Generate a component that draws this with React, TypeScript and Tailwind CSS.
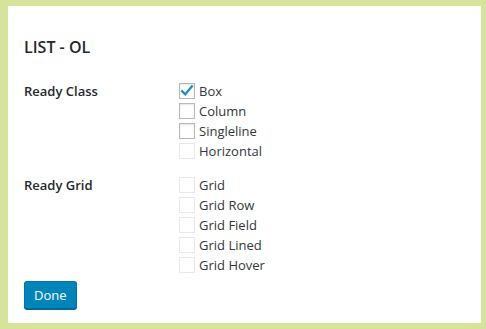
const classOptions = [
  { label: "Box", checked: true, enabled: true },
  { label: "Column", checked: false, enabled: true },
  { label: "Singleline", checked: false, enabled: true },
  { label: "Horizontal", checked: false, enabled: false },
];

const gridOptions = [
  { label: "Grid", checked: false, enabled: false },
  { label: "Grid Row", checked: false, enabled: false },
  { label: "Grid Field", checked: false, enabled: false },
  { label: "Grid Lined", checked: false, enabled: false },
  { label: "Grid Hover", checked: false, enabled: false },
];

type Option = { label: string; checked: boolean; enabled: boolean };

function CheckRow({ option }: { option: Option }) {
  return (
    <label className="flex h-[16px] items-center gap-[4px]">
      <span
        className={
          option.enabled
            ? "flex h-[16px] w-[16px] items-center justify-center border border-[#b4b9be] bg-white shadow-[inset_0_1px_2px_rgba(0,0,0,0.1)]"
            : "flex h-[16px] w-[16px] items-center justify-center border border-[#e8e8e8] bg-white"
        }
      >
        {option.checked && (
          <svg width="16" height="16" viewBox="0 0 16 16">
            <path
              d="M2.5 8.2 L6 11.8 L13.6 2.8"
              fill="none"
              stroke="#1e8cbe"
              strokeWidth="2.6"
              strokeLinecap="square"
            />
          </svg>
        )}
      </span>
      <span className="text-[13px] leading-none text-[#32373c]">{option.label}</span>
    </label>
  );
}

function Group({ title, options }: { title: string; options: Option[] }) {
  return (
    <div className="flex">
      <div className="w-[155px] text-[13px] font-semibold leading-[16px] text-[#23282d]">
        {title}
      </div>
      <div className="flex flex-col gap-[4px]">
        {options.map((o) => (
          <CheckRow key={o.label} option={o} />
        ))}
      </div>
    </div>
  );
}

export default function App() {
  return (
    <div
      className="flex h-[329px] w-[486px] bg-[#d5e39b] pb-[6px] pl-[8px] pr-[5px] pt-[6px]"
      style={{ fontFamily: '"Open Sans", "Noto Sans", sans-serif' }}
    >
      <div className="flex flex-1 flex-col bg-white px-[16px]">
        <h1 className="mt-[31px] text-[16px] font-semibold leading-[20px] text-[#23282d]">
          LIST - OL
        </h1>
        <div className="mt-[26px] flex flex-col gap-[18px]">
          <Group title="Ready Class" options={classOptions} />
          <Group title="Ready Grid" options={gridOptions} />
        </div>
        <div className="mt-[8px]">
          <button className="h-[28px] rounded-[3px] border border-[#0073aa] border-b-[#006799] bg-[#0085ba] px-[9px] text-[13px] leading-none text-white shadow-[0_1px_0_#006799]">
            Done
          </button>
        </div>
      </div>
    </div>
  );
}
